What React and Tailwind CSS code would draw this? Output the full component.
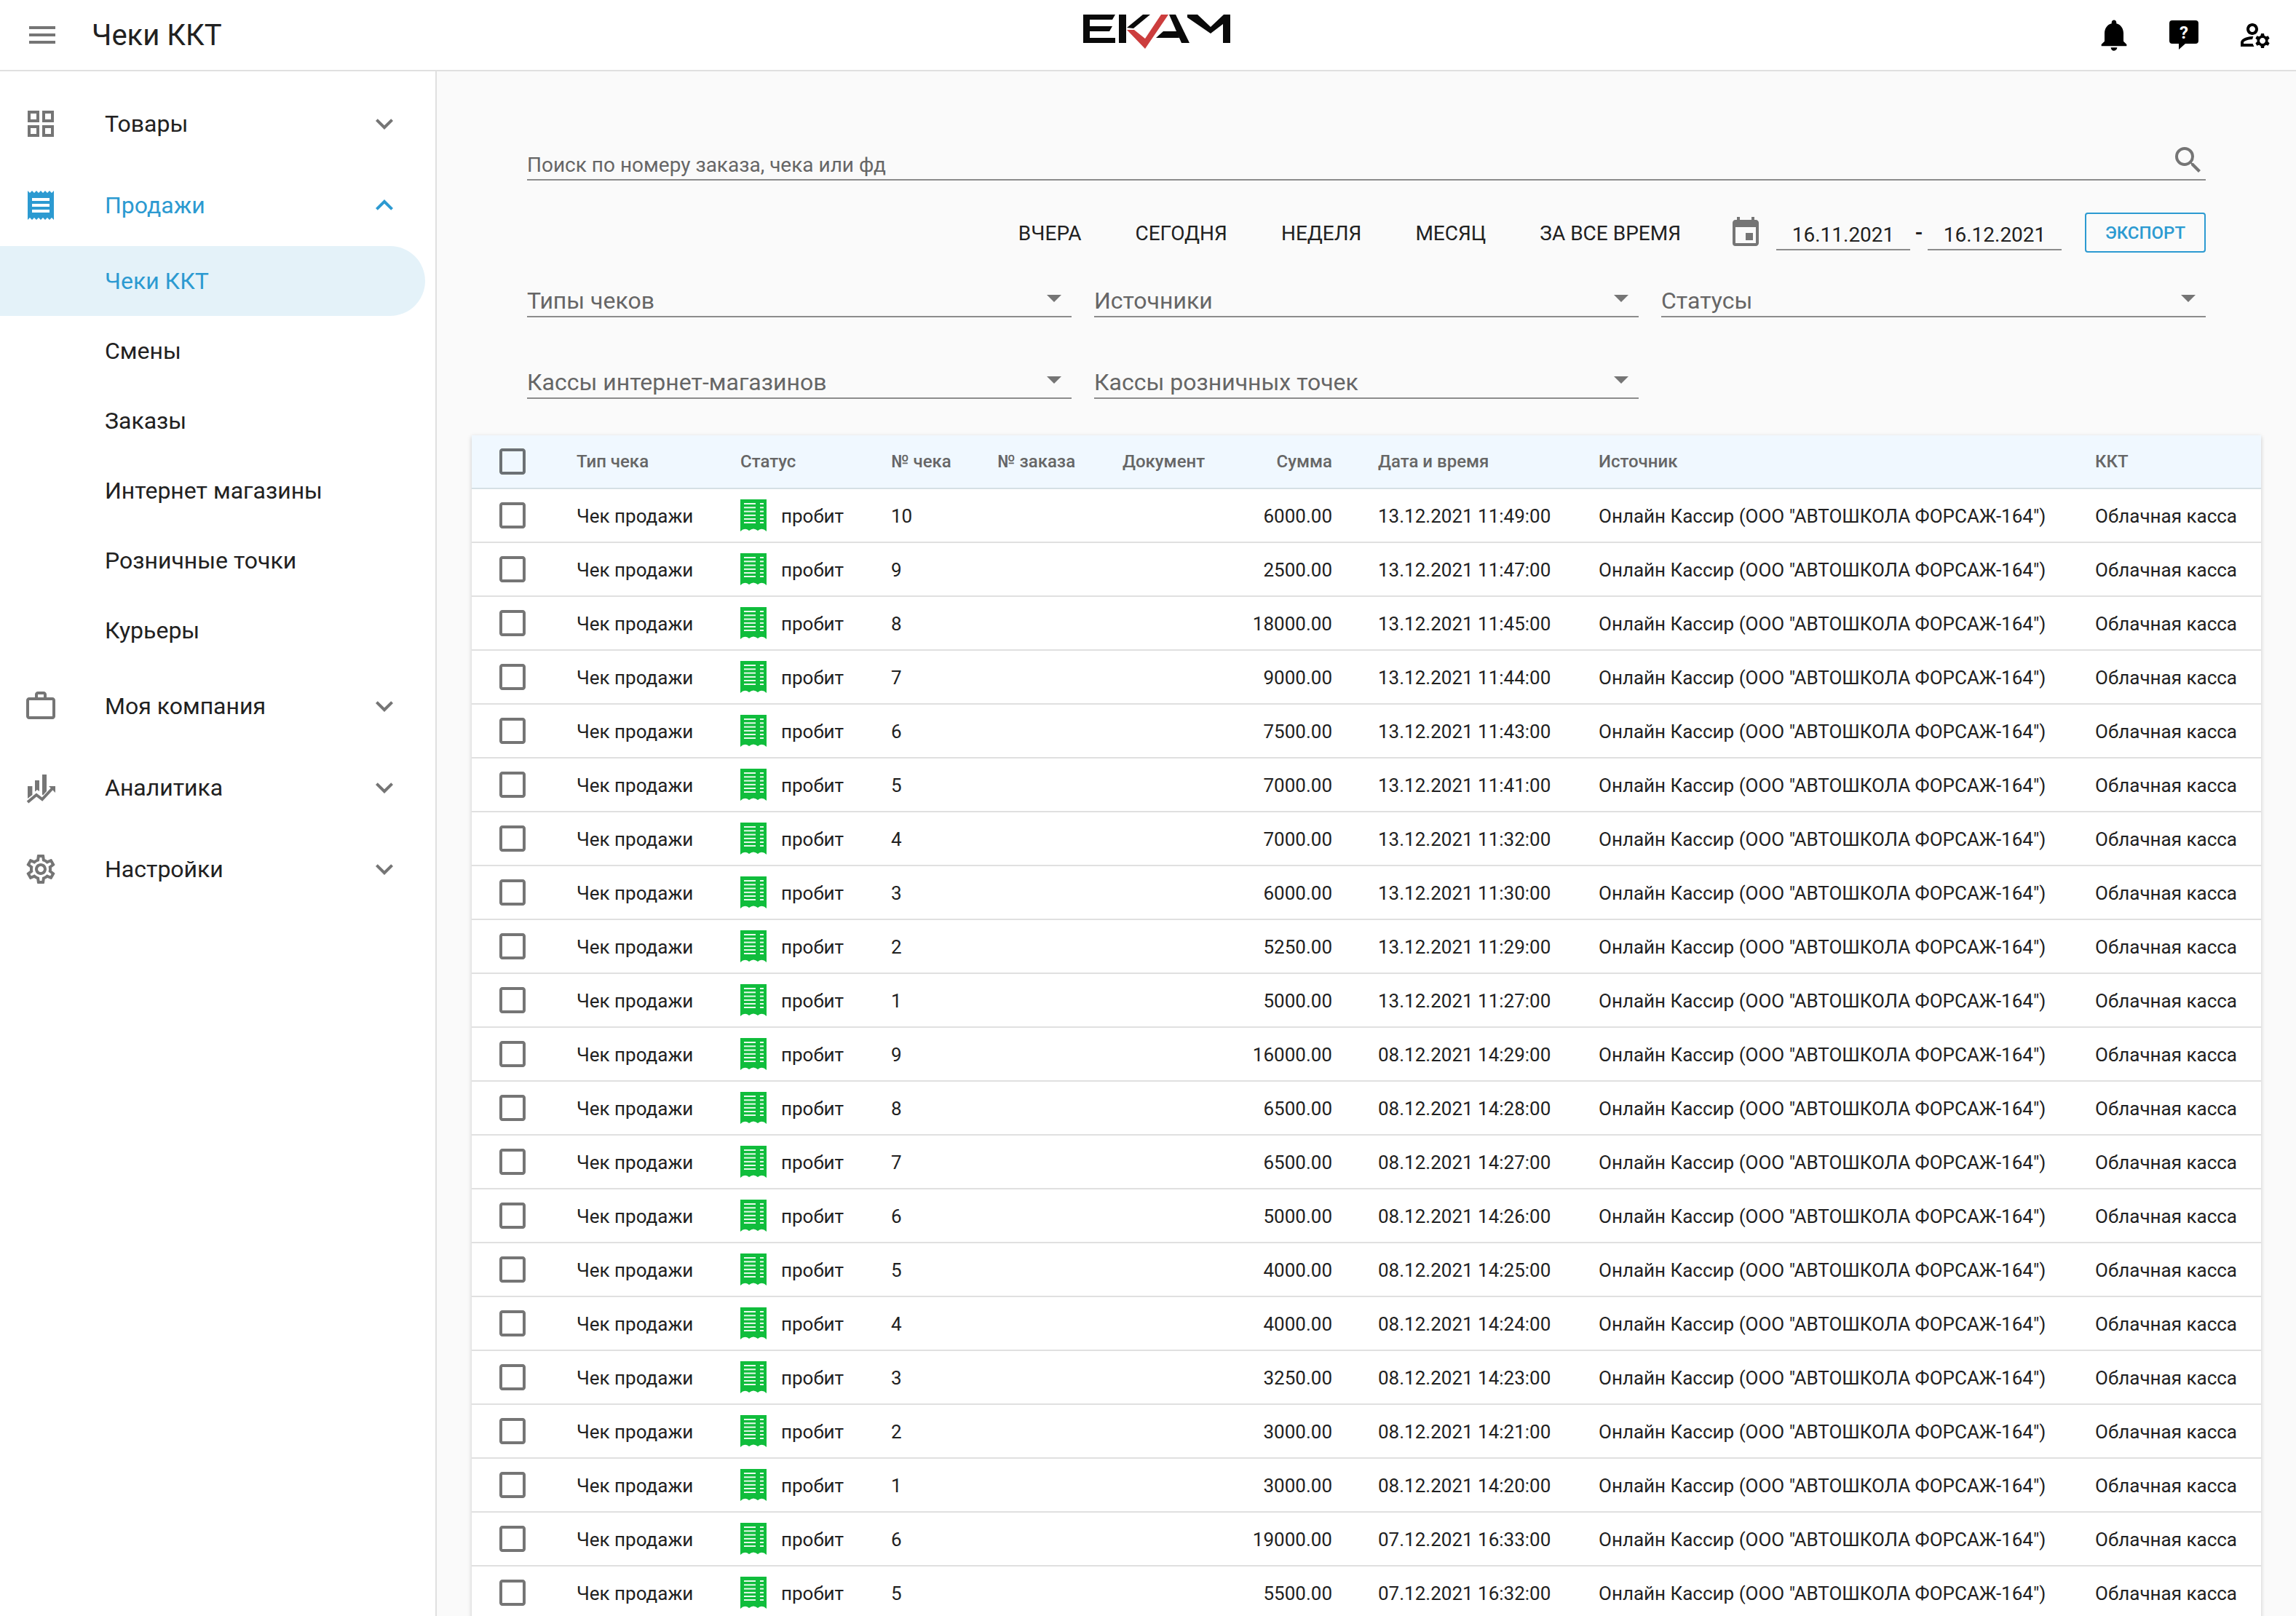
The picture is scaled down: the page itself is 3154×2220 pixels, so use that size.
import {
  MdMenu,
  MdNotifications,
  MdOutlineManageAccounts,
  MdOutlineGridView,
  MdReceipt,
  MdOutlineSettings,
  MdExpandMore,
  MdExpandLess,
  MdSearch,
  MdEvent,
  MdCheckBoxOutlineBlank,
  MdArrowDropDown,
} from "react-icons/md";

const subItems = ["Чеки ККТ", "Смены", "Заказы", "Интернет магазины", "Розничные точки", "Курьеры"];

const rows = [
  ["10", "6000.00", "13.12.2021 11:49:00"],
  ["9", "2500.00", "13.12.2021 11:47:00"],
  ["8", "18000.00", "13.12.2021 11:45:00"],
  ["7", "9000.00", "13.12.2021 11:44:00"],
  ["6", "7500.00", "13.12.2021 11:43:00"],
  ["5", "7000.00", "13.12.2021 11:41:00"],
  ["4", "7000.00", "13.12.2021 11:32:00"],
  ["3", "6000.00", "13.12.2021 11:30:00"],
  ["2", "5250.00", "13.12.2021 11:29:00"],
  ["1", "5000.00", "13.12.2021 11:27:00"],
  ["9", "16000.00", "08.12.2021 14:29:00"],
  ["8", "6500.00", "08.12.2021 14:28:00"],
  ["7", "6500.00", "08.12.2021 14:27:00"],
  ["6", "5000.00", "08.12.2021 14:26:00"],
  ["5", "4000.00", "08.12.2021 14:25:00"],
  ["4", "4000.00", "08.12.2021 14:24:00"],
  ["3", "3250.00", "08.12.2021 14:23:00"],
  ["2", "3000.00", "08.12.2021 14:21:00"],
  ["1", "3000.00", "08.12.2021 14:20:00"],
  ["6", "19000.00", "07.12.2021 16:33:00"],
  ["5", "5500.00", "07.12.2021 16:32:00"],
];

const gridCols = "grid grid-cols-[144px_225px_207px_146px_172px_172px_179px_303px_682px_1fr] items-center";

const Logo = () => (
  <svg width="202" height="48" viewBox="0 0 202 48" className="block">
    <path fill="#0a0a0a" d="M0 0H44L40 7H9V16H40L36 23H9V32H44V39H0Z" />
    <path fill="#0a0a0a" d="M49 0H59V39H49Z" />
    <path fill="#0a0a0a" d="M60 18L82 0H92L69 19Z" />
    <path fill="#0a0a0a" d="M118 0H127L146 39H135Z" />
    <path fill="#0a0a0a" d="M100 32L110 23H129L132 32Z" />
    <path fill="#0a0a0a" d="M143 0H157L175 17L193 0H202V39H192V13L175 26L143 4Z" />
    <path fill="#cc3d3d" d="M60 21L85 47L117 0H107L85 33L70 21Z" />
  </svg>
);

const HelpIcon = () => (
  <svg width="40" height="40" viewBox="0 0 40 40" className="block">
    <path d="M4 0H36A4 4 0 0 1 40 4V28A4 4 0 0 1 36 32H22L13 40V32H4A4 4 0 0 1 0 28V4A4 4 0 0 1 4 0Z" />
    <text x="20" y="25" textAnchor="middle" fill="#fff" fontSize="24" fontWeight="700" fontFamily="Roboto, sans-serif">?</text>
  </svg>
);

const BriefcaseIcon = ({ className }) => (
  <svg viewBox="0 0 24 24" className={className} fill="currentColor">
    <path d="M14 6V4h-4v2h4zM4 8v11h16V8H4zm16-2c1.11 0 2 .89 2 2v11c0 1.11-.89 2-2 2H4c-1.11 0-2-.89-2-2l.01-11c0-1.11.88-2 1.99-2h4V4c0-1.11.89-2 2-2h4c1.11 0 2 .89 2 2v2h4z" />
  </svg>
);

const AnalyticsIcon = ({ className }) => (
  <svg viewBox="0 0 24 24" className={className} fill="currentColor">
    <path d="M3 11H6.2V17L3 19.5ZM8 7H11V14.5L9.5 13.5L8 14.7ZM13 3H16V14.5L13.5 17.2L13 16.8Z" />
    <path d="M3 22L9 17L13 20L20.5 12" fill="none" stroke="currentColor" strokeWidth="2" />
    <path d="M17.5 11H22V15.5Z" />
  </svg>
);

const ReceiptGreen = () => (
  <svg width="36" height="44" viewBox="0 0 36 44" className="block shrink-0">
    <path fill="#10bd3c" d="M0 0H36V44Q30 38 24 43Q18 38 12 43Q6 38 0 44Z" />
    {[5, 10.3, 15.6, 20.9, 26, 31].map((y) => (
      <g key={y} fill="#e8f9ec">
        <rect x="5" y={y} width="16" height="2" />
        <rect x="27" y={y} width="5" height="2" />
      </g>
    ))}
  </svg>
);

const NavItem = ({ icon: Icon, label, open }) => (
  <div className={`flex h-[112px] items-center pl-[32px] pr-[46px] ${open ? "text-[#2c9ad1]" : "text-[#212121]"}`}>
    <Icon className={`size-[48px] ${open ? "text-[#2c9ad1]" : "text-[#757575]"}`} />
    <span className="ml-[64px] flex-1 text-[32px]">{label}</span>
    {open ? <MdExpandLess className="size-[48px]" /> : <MdExpandMore className="size-[48px] text-[#757575]" />}
  </div>
);

const SelectBox = ({ label }) => (
  <div className="flex h-[56px] items-start justify-between border-b-2 border-[#8c8c8c] text-[32px] text-[#666]">
    <span className="mt-[9px] leading-[48px]">{label}</span>
    <MdArrowDropDown className="mt-[5px] size-[48px] text-[#757575]" />
  </div>
);

const DateBox = ({ value }) => (
  <div className="flex h-[48px] w-[184px] items-center justify-center border-b-2 border-[#8c8c8c] pt-[8px] text-[28px] text-[#212121]">
    {value}
  </div>
);

export default function App() {
  return (
    <div className="flex h-screen flex-col overflow-hidden bg-[#fafafa] font-[Roboto,sans-serif]">
      <header className="flex h-[98px] shrink-0 items-center border-b-2 border-[#e0e0e0] bg-white">
        <div className="flex w-[1488px] items-center pl-[34px]">
          <MdMenu className="size-[48px] text-[#757575]" />
          <span className="ml-[44px] pt-[2px] text-[40px] text-[#212121]">Чеки ККТ</span>
        </div>
        <div className="mb-[8px]">
          <Logo />
        </div>
        <div className="flex flex-1 items-center justify-end pr-[32px]">
          <MdNotifications className="mr-[50px] size-[52px] text-black" />
          <div className="mr-[54px]">
            <HelpIcon />
          </div>
          <MdOutlineManageAccounts className="size-[48px] text-black" />
        </div>
      </header>

      <div className="flex min-h-0 flex-1">
        <aside className="w-[600px] shrink-0 border-r-2 border-[#e0e0e0] bg-white pt-[16px]">
          <NavItem icon={MdOutlineGridView} label="Товары" />
          <NavItem icon={MdReceipt} label="Продажи" open />
          {subItems.map((item, i) => (
            <div
              key={item}
              className={`flex h-[96px] w-[584px] items-center rounded-r-[48px] pl-[144px] text-[32px] ${
                i === 0 ? "bg-[#e4f2f9] text-[#2c9ad1]" : "text-[#212121]"
              }`}
            >
              {item}
            </div>
          ))}
          <NavItem icon={BriefcaseIcon} label="Моя компания" />
          <NavItem icon={AnalyticsIcon} label="Аналитика" />
          <NavItem icon={MdOutlineSettings} label="Настройки" />
        </aside>

        <main className="min-w-0 flex-1 px-[48px] pt-[98px]">
          <div className="px-[76px]">
            <div className="flex h-[52px] items-start justify-between border-b-2 border-[#8c8c8c] text-[28px] text-[#666]">
              <span className="mt-[11px] leading-[40px]">Поиск по номеру заказа, чека или фд</span>
              <MdSearch className="size-[48px] text-[#757575]" />
            </div>

            <div className="mt-[44px] flex h-[55px] items-center justify-end text-[28px] text-[#212121]">
              <span className="pt-[2px]">ВЧЕРА</span>
              <span className="ml-[74px] pt-[2px]">СЕГОДНЯ</span>
              <span className="ml-[74px] pt-[2px]">НЕДЕЛЯ</span>
              <span className="ml-[74px] pt-[2px]">МЕСЯЦ</span>
              <span className="ml-[74px] pt-[2px]">ЗА ВСЕ ВРЕМЯ</span>
              <MdEvent className="ml-[65px] size-[48px] text-[#757575]" />
              <div className="ml-[18px] flex items-center">
                <DateBox value="16.11.2021" />
                <span className="w-[24px] text-center font-bold">-</span>
                <DateBox value="16.12.2021" />
              </div>
              <div className="ml-[32px] flex h-[55px] w-[166px] items-center justify-center rounded-[4px] border-2 border-[#2c9ad1] text-[24px] font-medium text-[#2c9ad1]">
                ЭКСПОРТ
              </div>
            </div>

            <div className="mt-[33px] grid grid-cols-3 gap-x-[31px] gap-y-[56px]">
              <SelectBox label="Типы чеков" />
              <SelectBox label="Источники" />
              <SelectBox label="Статусы" />
              <SelectBox label="Кассы интернет-магазинов" />
              <SelectBox label="Кассы розничных точек" />
            </div>
          </div>

          <div className="mt-[50px] bg-white shadow-[0_2px_6px_rgba(0,0,0,0.2)]">
            <div className={`${gridCols} h-[74px] border-b-2 border-[#d5e0e5] bg-[#f0f8ff] text-[24px] font-medium text-[#666]`}>
              <div className="pl-[32px]">
                <MdCheckBoxOutlineBlank className="size-[48px] text-[#6c7174]" />
              </div>
              <div>Тип чека</div>
              <div>Статус</div>
              <div>№ чека</div>
              <div>№ заказа</div>
              <div>Документ</div>
              <div className="pr-[63px] text-right">Сумма</div>
              <div>Дата и время</div>
              <div>Источник</div>
              <div>ККТ</div>
            </div>
            {rows.map((row, i) => (
              <div key={i} className={`${gridCols} h-[74px] border-b-2 border-[#e0e0e0] text-[26px] text-[#212121]`}>
                <div className="pl-[32px]">
                  <MdCheckBoxOutlineBlank className="size-[48px] text-[#757575]" />
                </div>
                <div className="pt-[2px]">Чек продажи</div>
                <div className="flex items-center gap-[20px]">
                  <ReceiptGreen />
                  <span className="pt-[2px]">пробит</span>
                </div>
                <div className="pt-[2px]">{row[0]}</div>
                <div />
                <div />
                <div className="pr-[63px] pt-[2px] text-right">{row[1]}</div>
                <div className="pt-[2px]">{row[2]}</div>
                <div className="whitespace-nowrap pt-[2px]">Онлайн Кассир (ООО "АВТОШКОЛА ФОРСАЖ-164")</div>
                <div className="pt-[2px]">Облачная касса</div>
              </div>
            ))}
          </div>
        </main>
      </div>
    </div>
  );
}
